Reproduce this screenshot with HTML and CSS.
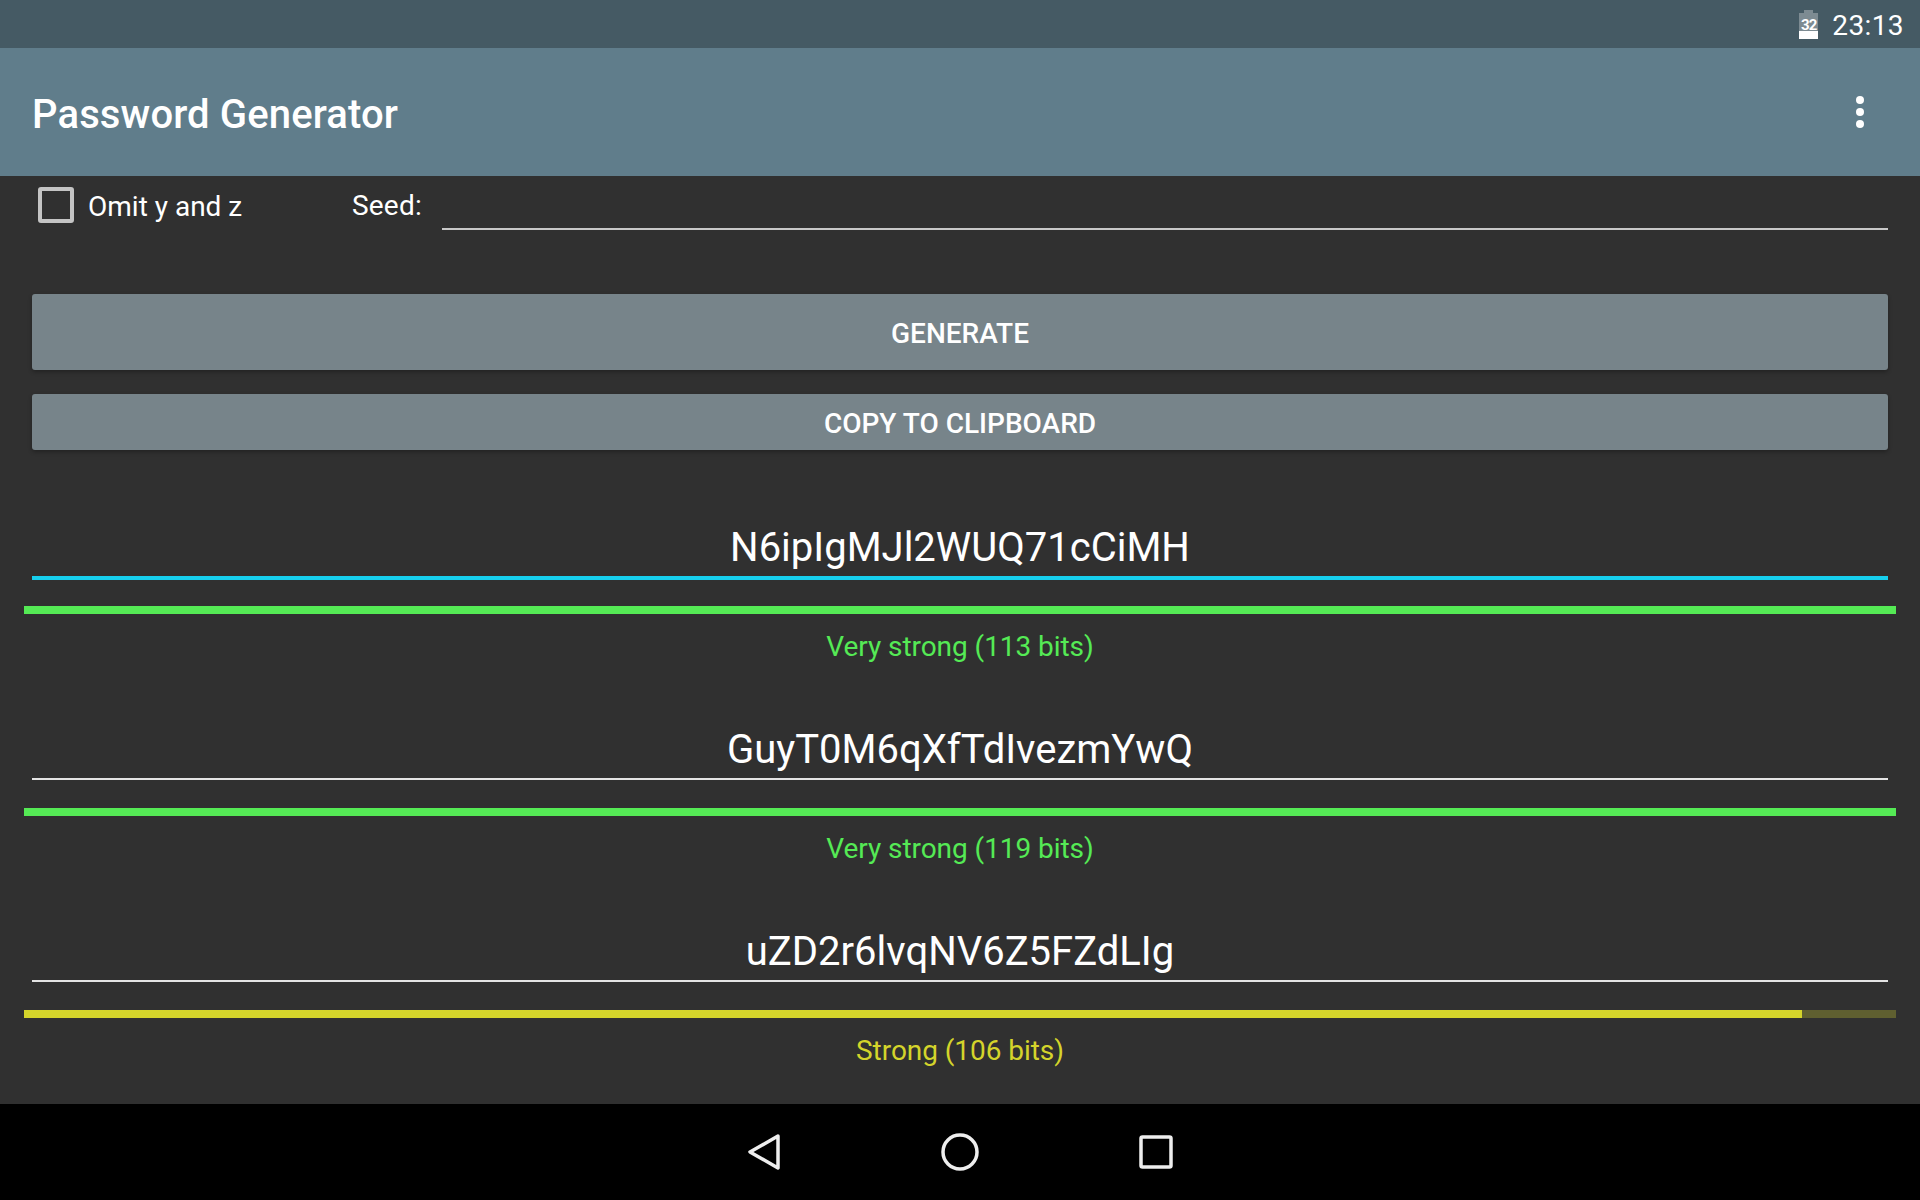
FILE: index.html
```html
<!DOCTYPE html>
<html lang="en">
<head>
    <meta charset="UTF-8">
    <title>Password Generator</title>
    <link rel="stylesheet" href="styles.css">
</head>
<body>
    <div class="status-bar">
        <div class="battery">
            <svg width="19" height="29" viewBox="0 0 19 29">
                <path d="M5 0h9v3h5v26H0V3h5z" fill="#fff" fill-opacity="0.3"/>
                <path d="M0 21h19v8H0z" fill="#fff"/>
            </svg>
            <span class="battery-level">32</span>
        </div>
        <span class="clock">23:13</span>
    </div>

    <header class="app-bar">
        <h1>Password Generator</h1>
        <div class="menu-dots"><i></i><i></i><i></i></div>
    </header>

    <main class="content">
        <div class="options">
            <label class="omit"><span class="checkbox"></span>Omit y and z</label>
            <span class="seed-label">Seed:</span>
            <div class="seed-input"></div>
        </div>

        <button class="btn btn-generate">GENERATE</button>
        <button class="btn btn-copy">COPY TO CLIPBOARD</button>

        <div class="pw-list">
            <section class="pw">
                <div class="pw-value pw-focused">N6ipIgMJl2WUQ71cCiMH</div>
                <div class="meter green"><div class="meter-fill" style="width: 100%"></div></div>
                <div class="pw-strength green-text">Very strong (113 bits)</div>
            </section>
            <section class="pw">
                <div class="pw-value">GuyT0M6qXfTdIvezmYwQ</div>
                <div class="meter green"><div class="meter-fill" style="width: 100%"></div></div>
                <div class="pw-strength green-text">Very strong (119 bits)</div>
            </section>
            <section class="pw">
                <div class="pw-value">uZD2r6lvqNV6Z5FZdLIg</div>
                <div class="meter yellow"><div class="meter-fill" style="width: 95%"></div></div>
                <div class="pw-strength yellow-text">Strong (106 bits)</div>
            </section>
        </div>
    </main>

    <nav class="nav-bar">
        <svg width="36" height="38" viewBox="0 0 36 38">
            <path d="M33 3 5 19 33 35z" fill="none" stroke="#eee" stroke-width="3.500" stroke-linejoin="round"/>
        </svg>
        <svg width="38" height="38" viewBox="0 0 38 38">
            <circle cx="19" cy="19" r="17" fill="none" stroke="#eee" stroke-width="3.500"/>
        </svg>
        <svg width="34" height="34" viewBox="0 0 34 34">
            <rect x="2" y="2" width="30" height="30" rx="1.500" fill="none" stroke="#eee" stroke-width="3.500"/>
        </svg>
    </nav>
</body>
</html>
```

FILE: styles.css
```css
html, body {
    margin: 0;
    padding: 0;
}

body {
    width: 1920px;
    height: 1200px;
    display: flex;
    flex-direction: column;
    background-color: #303030;
    color: #fff;
    font-family: Roboto, "Noto Sans", sans-serif;
    overflow: hidden;
}

.status-bar {
    height: 48px;
    flex: none;
    display: flex;
    align-items: center;
    justify-content: flex-end;
    padding-right: 16px;
    background-color: #455a64;
}

.battery {
    position: relative;
    width: 19px;
    height: 29px;
    margin-right: 14px;
}

.battery svg {
    display: block;
}

/* the level sits on top of the battery icon */
.battery-level {
    position: absolute;
    left: 0;
    right: 0;
    top: 7px;
    text-align: center;
    font-size: 15px;
    font-weight: 700;
    line-height: 16px;
    letter-spacing: -0.8px;
}

.clock {
    padding-top: 2px;
    font-size: 28px;
    letter-spacing: 0.4px;
}

.app-bar {
    height: 128px;
    flex: none;
    display: flex;
    align-items: center;
    justify-content: space-between;
    padding: 0 32px;
    background-color: #607d8b;
}

.app-bar h1 {
    margin: 0;
    padding-top: 4px;
    font-size: 40px;
    font-weight: 500;
    letter-spacing: 0.13px;
}

.menu-dots {
    display: flex;
    flex-direction: column;
    gap: 4px;
    margin-right: 24px;
}

.menu-dots i {
    width: 8px;
    height: 8px;
    border-radius: 50%;
    background-color: #fff;
}

.content {
    flex: 1;
    display: flex;
    flex-direction: column;
    padding: 0 32px;
}

.options {
    height: 54px;
    display: flex;
    align-items: flex-start;
    font-size: 28px;
}

.omit {
    display: flex;
    align-items: center;
    width: 320px;
    height: 54px;
    padding: 6px 0 0 6px;
    box-sizing: border-box;
}

.checkbox {
    width: 36px;
    height: 36px;
    box-sizing: border-box;
    border: 4px solid #c4c4c4;
    border-radius: 3px;
    margin: -2px 14px 0 0;
}

.seed-label {
    line-height: 59px;
    width: 90px;
    letter-spacing: 0.2px;
}

.seed-input {
    flex: 1;
    height: 52px;
    border-bottom: 2px solid #c8c8c8;
}

.btn {
    display: block;
    width: 100%;
    border: 0;
    border-radius: 3px;
    padding: 2px 0 0;
    background-color: #77848a;
    color: #fff;
    font-family: inherit;
    font-size: 28px;
    font-weight: 500;
    box-shadow: 0 2px 4px rgba(0, 0, 0, 0.3);
}

.btn-generate {
    height: 76px;
    margin-top: 64px;
}

.btn-copy {
    height: 56px;
    margin-top: 24px;
}

.pw-list {
    margin-top: 62px;
    display: flex;
    flex-direction: column;
    gap: 22px;
}

.pw {
    height: 180px;
}

.pw-value {
    height: 66px;
    line-height: 72px;
    box-sizing: border-box;
    border-bottom: 2px solid #e4e4e4;
    text-align: center;
    font-size: 40px;
}

.pw-focused {
    height: 68px;
    border-bottom: 4px solid #17cfee;
    margin-bottom: -2px;
}

.meter {
    height: 8px;
    margin: 28px -8px 0;
}

.meter.green {
    background-color: #55ea55;
}

.meter.yellow {
    background-color: #5f5f30;
}

.meter-fill {
    height: 100%;
}

.green .meter-fill {
    background-color: #55ea55;
}

.yellow .meter-fill {
    background-color: #d4d42b;
}

.pw-strength {
    margin-top: 9px;
    text-align: center;
    font-size: 28px;
    letter-spacing: -0.05px;
    line-height: 48px;
}

.green-text {
    color: #55ea55;
}

.yellow-text {
    color: #d4d42b;
}

.nav-bar {
    height: 96px;
    flex: none;
    display: flex;
    align-items: center;
    justify-content: center;
    gap: 160px;
    padding-right: 2px;
    background-color: #000;
}
```
